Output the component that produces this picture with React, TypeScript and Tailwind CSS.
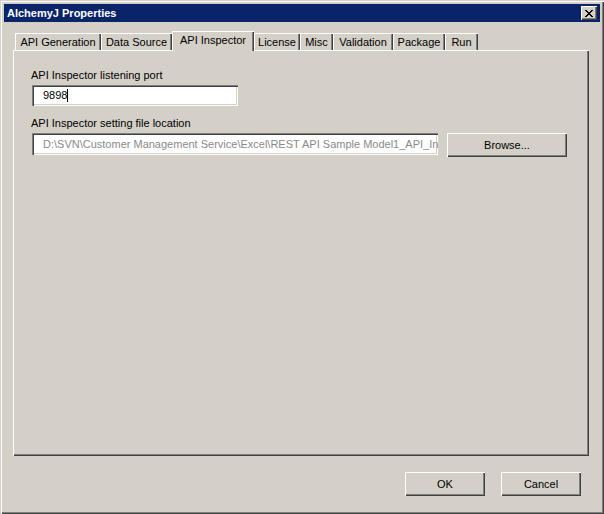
import React from "react";

const tabs = [
  { label: "API Generation", w: "w-[86px]" },
  { label: "Data Source", w: "w-[71px]" },
  { label: "API Inspector", w: "w-[82px]", active: true },
  { label: "License", w: "w-[46px]" },
  { label: "Misc", w: "w-[33px]" },
  { label: "Validation", w: "w-[60px]" },
  { label: "Package", w: "w-[52px]" },
  { label: "Run", w: "w-[33px]" },
];

const raised =
  "shadow-[inset_1px_1px_#ffffff,inset_-1px_-1px_#404040,inset_-2px_-2px_#808080]";
const sunken =
  "shadow-[inset_1px_1px_#808080,inset_2px_2px_#404040,inset_-1px_-1px_#ffffff,inset_-2px_-2px_#d4d0c8]";

function Button({ label, w }: { label: string; w: string }) {
  return (
    <button
      className={`${w} h-[24px] bg-[#d4d0c8] ${raised} flex items-center justify-center text-[11px] text-black`}
    >
      {label}
    </button>
  );
}

export default function App() {
  return (
    <div
      className="w-[604px] h-[514px] bg-[#d4d0c8] p-[4px] flex flex-col text-[11px] leading-[13px] text-black shadow-[inset_1px_1px_#d4d0c8,inset_2px_2px_#ffffff,inset_-1px_-1px_#404040,inset_-2px_-2px_#808080]"
      style={{ fontFamily: "'Liberation Sans', Arial, sans-serif" }}
    >
      {/* title bar */}
      <div className="h-[18px] bg-[#0a246a] flex items-center justify-between pl-[3px] pr-[3px]">
        <span className="text-white font-bold text-[11px]">AlchemyJ Properties</span>
        <div className={`w-[16px] h-[14px] bg-[#d4d0c8] ${raised} flex items-center justify-center`}>
          <svg width="8" height="7" viewBox="0 0 8 7" shapeRendering="crispEdges">
            <path
              d="M0 0h2v1H0zM6 0h2v1H6zM1 1h2v1H1zM5 1h2v1H5zM2 2h4v1H2zM3 3h2v1H3zM2 4h4v1H2zM1 5h2v1H1zM5 5h2v1H5zM0 6h2v1H0zM6 6h2v1H6z"
              fill="#000"
            />
          </svg>
        </div>
      </div>

      {/* body */}
      <div className="flex flex-col pl-[9px] pt-[9px]">
        {/* tabs */}
        <div className="h-[19px] flex items-end pl-[2px] relative z-10">
          {tabs.map((t) =>
            t.active ? (
              <div
                key={t.label}
                className={`${t.w} h-[20px] -mb-[1px] bg-[#d4d0c8] shadow-[inset_1px_1px_#ffffff,inset_-1px_0_#404040,inset_-2px_0_#808080] flex items-start justify-center pt-[3px]`}
              >
                {t.label}
              </div>
            ) : (
              <div
                key={t.label}
                className={`${t.w} h-[17px] bg-[#d4d0c8] shadow-[inset_1px_1px_#ffffff,inset_-1px_0_#404040,inset_-2px_0_#808080] flex items-start justify-center pt-[3px]`}
              >
                {t.label}
              </div>
            )
          )}
        </div>

        {/* panel */}
        <div className={`w-[576px] h-[406px] ${raised} pl-[18px] pt-[19px] flex flex-col`}>
          <div>API Inspector listening port</div>
          <div className={`ml-[1px] mt-[3px] w-[206px] h-[21px] bg-white ${sunken} flex items-center pl-[11px]`}>
            <span>9898</span>
            <span className="w-[1px] h-[13px] bg-black" />
          </div>

          <div className="mt-[11px]">API Inspector setting file location</div>
          <div className="mt-[3px] flex items-start gap-[9px] ml-[1px]">
            <div
              className={`w-[406px] h-[22px] bg-white ${sunken} flex items-center pl-[11px] overflow-hidden whitespace-nowrap text-[#8a8a8a]`}
            >
              D:\SVN\Customer Management Service\Excel\REST API Sample Model1_API_Inspector.xml
            </div>
            <Button label="Browse..." w="w-[120px]" />
          </div>
        </div>

        {/* dialog buttons */}
        <div className="w-[576px] flex justify-end gap-[16px] pr-[8px] mt-[16px]">
          <Button label="OK" w="w-[80px]" />
          <Button label="Cancel" w="w-[80px]" />
        </div>
      </div>
    </div>
  );
}
